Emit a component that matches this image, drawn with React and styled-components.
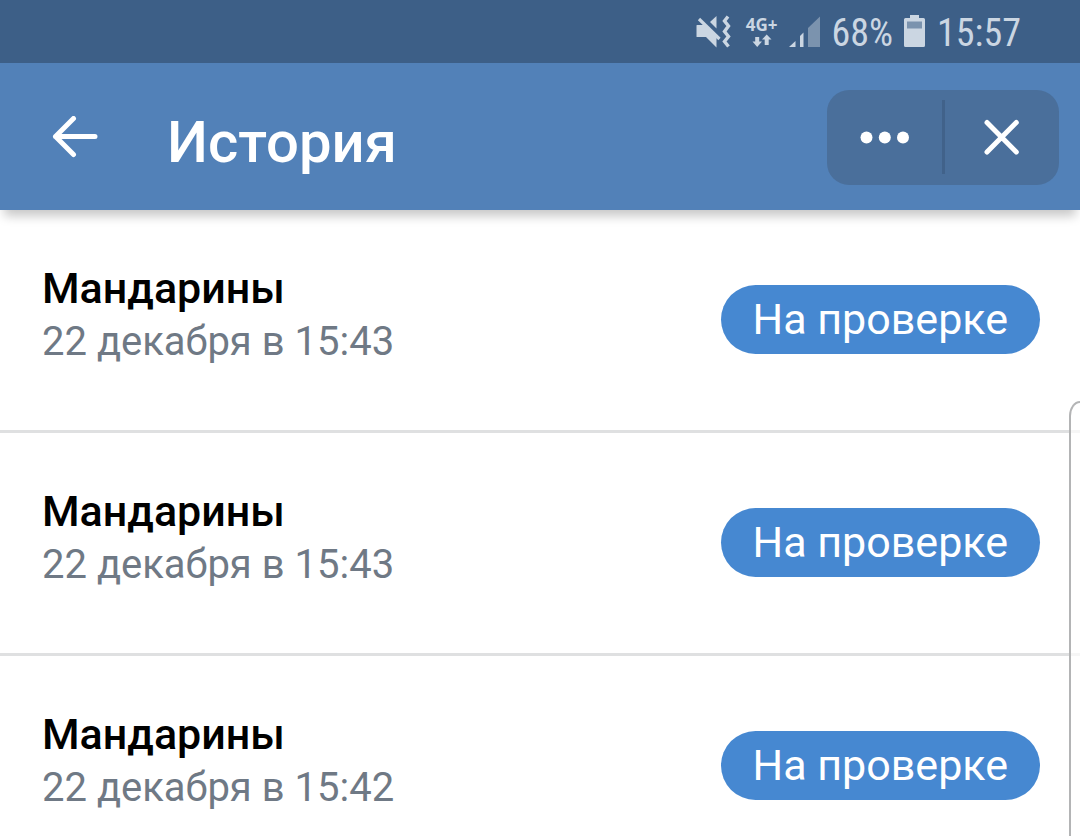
import styled, { createGlobalStyle } from "styled-components";

const HISTORY = [
  { id: 1, title: "Мандарины", date: "22 декабря в 15:43", status: "На проверке" },
  { id: 2, title: "Мандарины", date: "22 декабря в 15:43", status: "На проверке" },
  { id: 3, title: "Мандарины", date: "22 декабря в 15:42", status: "На проверке" },
];

const COLORS = {
  statusBar: "#3d5f87",
  statusIcon: "#cbd6e2",
  statusIconDim: "#7b93ae",
  header: "#5281b8",
  controls: "#4a6f9b",
  controlsDivider: "#41628a",
  badge: "#4688d1",
  muted: "#6f7985",
  border: "#dfe0e1",
  white: "#fff",
};

export default () => (
  <Screen>
    <GlobalStyle />
    <StatusBar>
      <MuteIcon />
      <Network>
        4G+
        <DataIcon />
      </Network>
      <SignalIcon />
      <StatusText>68%</StatusText>
      <BatteryIcon />
      <StatusText>15:57</StatusText>
    </StatusBar>
    <Header>
      <BackButton type="button" aria-label="Назад">
        <svg width="46" height="42" viewBox="0 0 46 42">
          <path d="M21.500 2.500 3.500 20.500 21.500 38.500M3.500 20.500H43" />
        </svg>
      </BackButton>
      <Title>История</Title>
      <Controls>
        <ControlButton type="button" aria-label="Меню">
          <svg width="50" height="14" viewBox="0 0 50 14">
            <circle cx="7.500" cy="7.500" r="6" />
            <circle cx="25.800" cy="7.500" r="6" />
            <circle cx="44" cy="7.500" r="6" />
          </svg>
        </ControlButton>
        <Divider />
        <ControlButton type="button" aria-label="Закрыть">
          <svg width="36" height="36" viewBox="0 0 36 36">
            <path d="M3 3.500 32.300 33M32.300 3.500 3 33" />
          </svg>
        </ControlButton>
      </Controls>
    </Header>
    <List>
      {HISTORY.map(({ id, title, date, status }) => (
        <Row key={id}>
          <RowText>
            <RowTitle>{title}</RowTitle>
            <RowDate>{date}</RowDate>
          </RowText>
          <Badge>{status}</Badge>
        </Row>
      ))}
    </List>
    <EdgePanel />
  </Screen>
);

const MuteIcon = () => (
  <svg width="36" height="34" viewBox="0 0 36 34" fill={COLORS.statusIcon}>
    <path d="M1 10H9L20.500 21V32.500L10 22H1Q0.500 22 0.500 21.500V10.500Q0.500 10 1 10Z" />
    <path d="M14 7 20.500 1V13.500Z" />
    <path
      d="M3 4 23.500 24"
      stroke={COLORS.statusIcon}
      strokeWidth="3.200"
    />
    <path
      d="M32 1.500 28.500 6 32.500 11 28.500 16.500 32.500 21.500 28.500 26.500 32.500 31.500"
      fill="none"
      stroke={COLORS.statusIcon}
      strokeWidth="3.400"
    />
  </svg>
);

const DataIcon = () => (
  <svg width="20" height="13" viewBox="0 0 20 13" fill={COLORS.statusIcon}>
    <path d="M3.200 3H7.200V7.500H10L5.200 13 0.500 7.500H3.200Z" />
    <path d="M12.700 11H16.700V5.500H19.500L14.700 0.500 10 5.500H12.700Z" />
  </svg>
);

const SignalIcon = () => (
  <svg width="32" height="32" viewBox="0 0 32 32" fill={COLORS.statusIcon}>
    <path d="M0 31 6.500 25V31Z" />
    <path d="M11 20 14.500 16.500V31H11Z" />
    <path d="M19 12 31 0.500V31H19Z" fill={COLORS.statusIconDim} />
  </svg>
);

const BatteryIcon = () => (
  <svg width="22" height="34" viewBox="0 0 22 34" fill={COLORS.statusIcon}>
    <path d="M6 0H15V3H19.500Q21 3 21 4.500V30.500Q21 32 19.500 32H1.500Q0 32 0 30.500V4.500Q0 3 1.500 3H6Z" />
    <path d="M3 6.500H18V13.500H3Z" fill={COLORS.statusIconDim} />
  </svg>
);

const GlobalStyle = createGlobalStyle`
  body {
    margin: 0;
    background: ${COLORS.white};
    font-family: Roboto, "Noto Sans", sans-serif;
  }

  * {
    box-sizing: border-box;
  }
`;

const Screen = styled.div`
  position: relative;
  display: flex;
  flex-direction: column;
  height: 100vh;
  overflow: hidden;
`;

const StatusBar = styled.div`
  display: flex;
  flex-shrink: 0;
  align-items: center;
  justify-content: flex-end;
  gap: 11px;
  height: 63px;
  padding: 0 59px 0 24px;
  background: ${COLORS.statusBar};
  color: ${COLORS.statusIcon};

  svg {
    flex-shrink: 0;
  }
`;

const Network = styled.div`
  display: flex;
  flex-direction: column;
  align-items: center;
  padding: 0 0 2px 3px;
  font-family: "Open Sans", sans-serif;
  font-size: 17px;
  font-weight: 700;
  line-height: 19px;
`;

const StatusText = styled.span`
  padding-top: 2px;
  font-family: "Roboto Condensed", Roboto, sans-serif;
  font-size: 38px;
  line-height: 48px;
`;

const Header = styled.header`
  position: relative;
  z-index: 1;
  display: flex;
  flex-shrink: 0;
  align-items: center;
  height: 147px;
  padding: 1px 21px 0 52px;
  background: ${COLORS.header};
  color: ${COLORS.white};
  box-shadow: 0 10px 10px -4px rgba(0, 0, 0, 0.22);
`;

const BackButton = styled.button`
  display: flex;
  padding: 0;
  border: 0;
  background: none;
  cursor: pointer;

  svg {
    fill: none;
    stroke: ${COLORS.white};
    stroke-width: 5;
    stroke-linecap: round;
    stroke-linejoin: round;
  }
`;

const Title = styled.h1`
  flex: 1;
  margin: 0;
  padding: 10px 0 0 69px;
  font-size: 58px;
  font-weight: 500;
  line-height: 68px;
`;

const Controls = styled.div`
  display: flex;
  align-items: center;
  width: 232px;
  height: 95px;
  border-radius: 22px;
  background: ${COLORS.controls};
`;

const ControlButton = styled.button`
  display: flex;
  flex: 1;
  align-items: center;
  justify-content: center;
  height: 100%;
  padding: 0;
  border: 0;
  background: none;
  cursor: pointer;

  svg {
    fill: ${COLORS.white};
    stroke-linecap: round;
  }

  path {
    stroke: ${COLORS.white};
    stroke-width: 5;
  }
`;

const Divider = styled.span`
  width: 3px;
  height: 74px;
  background: ${COLORS.controlsDivider};
`;

const List = styled.ul`
  flex: 1;
  min-height: 0;
  margin: 0;
  padding: 0;
  overflow-y: auto;
  scrollbar-width: none;
  list-style: none;
`;

const Row = styled.li`
  display: flex;
  align-items: center;
  justify-content: space-between;
  height: 223px;
  padding: 0 40px 2px 42px;
  border-bottom: 3px solid ${COLORS.border};
`;

const RowText = styled.div`
  padding-bottom: 8px;
`;

const RowTitle = styled.h2`
  margin: 0;
  color: #000;
  font-size: 43px;
  font-weight: 500;
  line-height: 52px;
`;

const RowDate = styled.p`
  margin: 2px 0 0;
  color: ${COLORS.muted};
  font-size: 40px;
  line-height: 52px;
`;

const Badge = styled.span`
  padding: 0 32px;
  border-radius: 35px;
  background: ${COLORS.badge};
  color: ${COLORS.white};
  font-size: 43px;
  line-height: 69px;
`;

/* system side panel handle, floats over the list */
const EdgePanel = styled.div`
  position: absolute;
  top: 401px;
  right: 0;
  bottom: 0;
  z-index: 2;
  width: 11px;
  border: 2px solid #b3b4b5;
  border-right: 0;
  border-bottom: 0;
  border-top-left-radius: 11px 15px;
  background: rgba(255, 255, 255, 0.7);
`;
